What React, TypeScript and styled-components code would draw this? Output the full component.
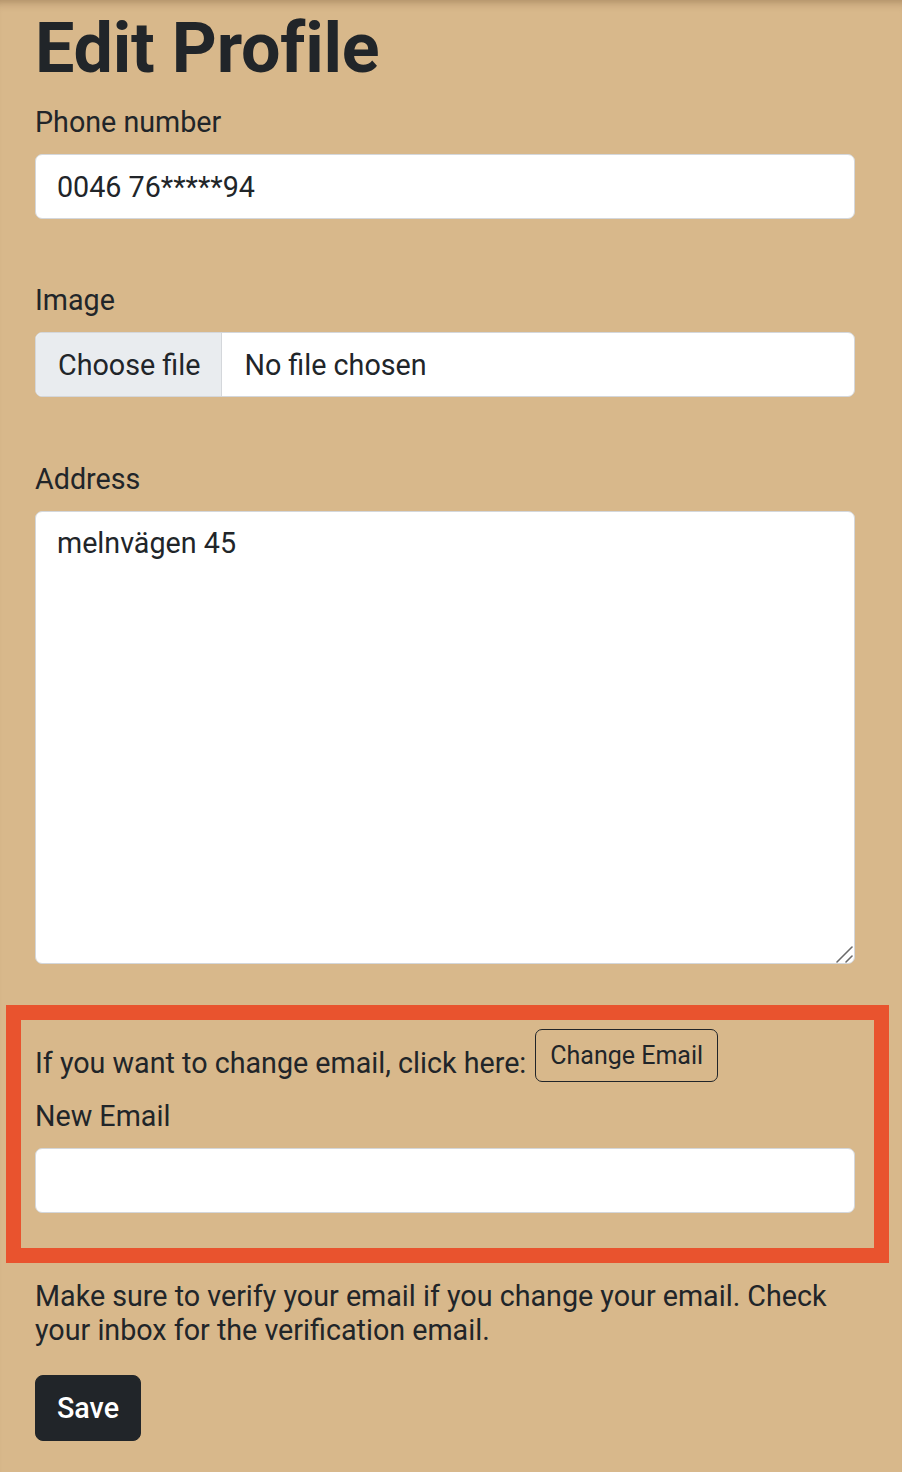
import React from "react";
import styled, { createGlobalStyle } from "styled-components";

const GlobalStyle = createGlobalStyle`
  html, body {
    margin: 0;
    padding: 0;
    background: #d8b88b;
  }
  body {
    font-family: Roboto, "Liberation Sans", Arial, sans-serif;
    color: #212529;
  }
  * { box-sizing: border-box; }
`;

const Page = styled.div`
  min-height: 1472px;
  background: #d8b88b;
  box-shadow: inset 0 10px 10px -8px rgba(80, 50, 20, 0.35);
  padding: 6px 47px 40px 35px;
`;

const Heading = styled.h1`
  margin: 0 0 8px;
  font-size: 70px;
  font-weight: 700;
  line-height: 84px;
  letter-spacing: -0.2px;
`;

const Group = styled.div<{ $gap?: number }>`
  margin-bottom: ${(p) => p.$gap ?? 0}px;
`;

const Label = styled.label`
  display: block;
  font-size: 28.7px;
  line-height: 42px;
  padding-top: 3px;
  margin-bottom: 11px;
`;

const TextInput = styled.input`
  display: block;
  width: 100%;
  height: 65px;
  padding: 10px 21px;
  font-family: inherit;
  font-size: 28.7px;
  line-height: 42px;
  color: #212529;
  background: #fff;
  border: 1px solid #d4d7db;
  border-radius: 7px;
  outline: none;
`;

const FileBox = styled.div`
  display: flex;
  align-items: stretch;
  height: 65px;
  background: #fff;
  border: 1px solid #d4d7db;
  border-radius: 7px;
  overflow: hidden;
  font-size: 28.7px;
`;

const FileButton = styled.span`
  display: flex;
  align-items: center;
  padding: 0 21px 0 22px;
  background: #e9ecef;
  border-right: 1px solid #d4d7db;
`;

const FileName = styled.span`
  display: flex;
  align-items: center;
  padding: 0 22px;
`;

const AreaWrap = styled.div`
  position: relative;
`;

const TextArea = styled.textarea`
  display: block;
  width: 100%;
  height: 453px;
  padding: 10px 21px;
  font-family: inherit;
  font-size: 28.7px;
  line-height: 42px;
  color: #212529;
  background: #fff;
  border: 1px solid #d4d7db;
  border-radius: 7px;
  resize: none;
  outline: none;
`;

const Grip = styled.svg`
  position: absolute;
  right: 0;
  bottom: 0;
  width: 20px;
  height: 20px;
  pointer-events: none;
`;

const Highlight = styled.div`
  margin: 41px -34px 0 -29px;
  border: 15px solid #e9532e;
  padding: 9px 19px 35px 14px;
`;

const ChangeRow = styled.div`
  display: flex;
  align-items: flex-end;
  gap: 9px;
  margin-bottom: 10px;
  font-size: 28.7px;
  line-height: 42px;
`;

const RowText = styled.span`
  margin-bottom: -2px;
`;

const OutlineButton = styled.button`
  height: 53px;
  padding: 0 14px;
  font-family: inherit;
  font-size: 25px;
  line-height: 36px;
  color: #212529;
  background: transparent;
  border: 1px solid #212529;
  border-radius: 7px;
  cursor: pointer;
`;

const Note = styled.p`
  margin: 16px 0 28px;
  font-size: 28.7px;
  line-height: 34px;
`;

const SaveButton = styled.button`
  height: 66px;
  padding: 0 21px;
  font-family: inherit;
  font-size: 28.7px;
  font-weight: 500;
  color: #fff;
  background: #212529;
  border: 1px solid #212529;
  border-radius: 8px;
  cursor: pointer;
`;

export default function App() {
  return (
    <>
      <GlobalStyle />
      <Page>
        <Heading>Edit Profile</Heading>
        <Group $gap={57}>
          <Label>Phone number</Label>
          <TextInput type="text" readOnly value="0046 76*****94" />
        </Group>
        <Group $gap={58}>
          <Label>Image</Label>
          <FileBox>
            <FileButton>Choose file</FileButton>
            <FileName>No file chosen</FileName>
          </FileBox>
        </Group>
        <Group>
          <Label>Address</Label>
          <AreaWrap>
            <TextArea readOnly value="melnvägen 45" />
            <Grip viewBox="0 0 20 20" aria-hidden="true">
              <line x1="2" y1="18" x2="17" y2="3" stroke="#6a6a6a" strokeWidth="1.6" strokeLinecap="round" />
              <line x1="11" y1="18" x2="17" y2="12" stroke="#6a6a6a" strokeWidth="1.6" strokeLinecap="round" />
            </Grip>
          </AreaWrap>
        </Group>
        <Highlight>
          <ChangeRow>
            <RowText>If you want to change email, click here:</RowText>
            <OutlineButton type="button">Change Email</OutlineButton>
          </ChangeRow>
          <Label>New Email</Label>
          <TextInput type="email" readOnly value="" />
        </Highlight>
        <Note>
          Make sure to verify your email if you change your email. Check your
          inbox for the verification email.
        </Note>
        <SaveButton type="button">Save</SaveButton>
      </Page>
    </>
  );
}
